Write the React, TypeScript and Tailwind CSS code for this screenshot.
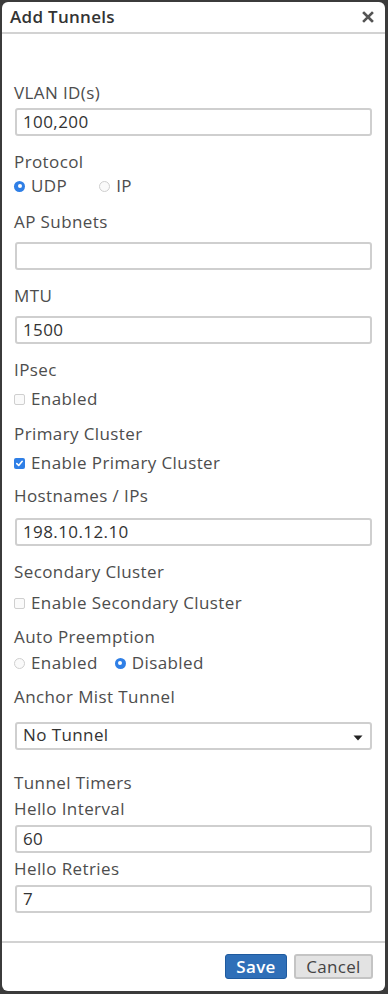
import React from 'react';

const font = { fontFamily: '"Open Sans", "Liberation Sans", sans-serif' };

const Label: React.FC<{ text: string; className?: string }> = ({ text, className = '' }) => (
  <div className={`h-6 leading-6 text-[17px] tracking-[0.4px] text-[#4d4d4d] ${className}`}>{text}</div>
);

const TextInput: React.FC<{ value: string; className?: string }> = ({ value, className = '' }) => (
  <div
    className={`mx-px h-[28px] rounded-[3px] border-2 border-[#cfcfcf] bg-white pl-[6px] text-[17px] leading-[24px] tracking-[0.4px] text-[#333] ${className}`}
  >
    {value}
  </div>
);

const Radio: React.FC<{ checked?: boolean }> = ({ checked }) =>
  checked ? (
    <span className="flex h-[11px] w-[11px] items-center justify-center rounded-full bg-[#2f7fe6]">
      <span className="h-[4px] w-[4px] rounded-full bg-white" />
    </span>
  ) : (
    <span className="h-[11px] w-[11px] rounded-full border border-[#cfcfcf] bg-[#fafafa]" />
  );

const Check: React.FC<{ checked?: boolean }> = ({ checked }) =>
  checked ? (
    <span className="flex h-[11px] w-[11px] items-center justify-center rounded-[2px] bg-[#2f7fe6]">
      <svg width="9" height="9" viewBox="0 0 9 9">
        <path d="M1.8 4.6 L3.7 6.5 L7.2 2.3" fill="none" stroke="white" strokeWidth="1.6" strokeLinecap="round" strokeLinejoin="round" />
      </svg>
    </span>
  ) : (
    <span className="h-[11px] w-[11px] rounded-[2px] border border-[#cfcfcf] bg-[#fafafa]" />
  );

const Option: React.FC<{ children: React.ReactNode; control: React.ReactNode; className?: string }> = ({
  children,
  control,
  className = '',
}) => (
  <span className={`flex items-center ${className}`}>
    <span className="mr-[6px] flex items-center">{control}</span>
    <span className="text-[17px] tracking-[0.4px] text-[#4d4d4d]">{children}</span>
  </span>
);

export default function App() {
  return (
    <div className="h-[994px] w-[388px] bg-[#3b3b3b] pb-[3px] pl-[2px] pr-[3px] pt-[2px]" style={font}>
      <div className="flex h-full flex-col overflow-hidden rounded-[6px] bg-white">
        <div className="flex h-[32px] shrink-0 items-center justify-between border-b-2 border-[#d2d2d2] pl-[8px] pr-[11px]">
          <span className="text-[17px] font-semibold tracking-[0.3px] text-[#333]">Add Tunnels</span>
          <svg width="12" height="12" viewBox="0 0 12 12">
            <path d="M2 2 L10 10 M10 2 L2 10" stroke="#555" strokeWidth="2.6" strokeLinecap="square" />
          </svg>
        </div>

        <div className="flex-1 px-[12px] pt-[47px]">
          <Label text="VLAN ID(s)" />
          <TextInput value="100,200" className="mt-[3px]" />

          <Label text="Protocol" className="mt-[14px]" />
          <div className="flex h-6 items-center">
            <Option control={<Radio checked />}>UDP</Option>
            <Option control={<Radio />} className="ml-[32px]">
              IP
            </Option>
          </div>

          <Label text="AP Subnets" className="mt-3" />
          <TextInput value="" className="mt-2" />

          <Label text="MTU" className="mt-[14px]" />
          <TextInput value="1500" className="mt-2" />

          <Label text="IPsec" className="mt-[14px]" />
          <div className="mt-[5px] flex h-6 items-center">
            <Option control={<Check />}>Enabled</Option>
          </div>

          <Label text="Primary Cluster" className="mt-[11px]" />
          <div className="mt-[5px] flex h-6 items-center">
            <Option control={<Check checked />}>Enable Primary Cluster</Option>
          </div>

          <Label text="Hostnames / IPs" className="mt-[9px]" />
          <TextInput value="198.10.12.10" className="mt-[10px]" />

          <Label text="Secondary Cluster" className="mt-[14px]" />
          <div className="mt-[7px] flex h-6 items-center">
            <Option control={<Check />}>Enable Secondary Cluster</Option>
          </div>

          <Label text="Auto Preemption" className="mt-[10px]" />
          <div className="mt-[2px] flex h-6 items-center">
            <Option control={<Radio />}>Enabled</Option>
            <Option control={<Radio checked />} className="ml-[17px]">
              Disabled
            </Option>
          </div>

          <Label text="Anchor Mist Tunnel" className="mt-[10px]" />
          <div className="mx-px mt-[13px] flex h-[28px] items-center justify-between rounded-[3px] border-2 border-[#cfcfcf] bg-white pl-[6px] pr-[7px] text-[17px] tracking-[0.4px] text-[#333]">
            <span className="-mt-[2px]">No Tunnel</span>
            <svg width="10" height="6" viewBox="0 0 10 6" className="mt-[4px]">
              <path d="M0.5 0.5 L9.5 0.5 L5 5.5 Z" fill="#222" />
            </svg>
          </div>

          <Label text="Tunnel Timers" className="mt-[21px]" />
          <Label text="Hello Interval" className="mt-[2px]" />
          <TextInput value="60" className="mt-[4px]" />
          <Label text="Hello Retries" className="mt-[4px]" />
          <TextInput value="7" className="mt-[4px]" />
        </div>

        <div className="flex shrink-0 justify-end gap-[7px] border-t-2 border-[#d2d2d2] pb-[12px] pr-[12px] pt-[11px]">
          <button className="flex h-[25px] w-[62px] items-center justify-center rounded-[3px] border border-[#1f5a9e] bg-[#2f6fb8] text-[17px] font-semibold tracking-[0.3px] text-white">
            Save
          </button>
          <button className="flex h-[25px] w-[79px] items-center justify-center rounded-[3px] border-2 border-[#c4c4c4] bg-[#e3e3e3] text-[17px] tracking-[0.3px] text-[#444]">
            Cancel
          </button>
        </div>
      </div>
    </div>
  );
}
